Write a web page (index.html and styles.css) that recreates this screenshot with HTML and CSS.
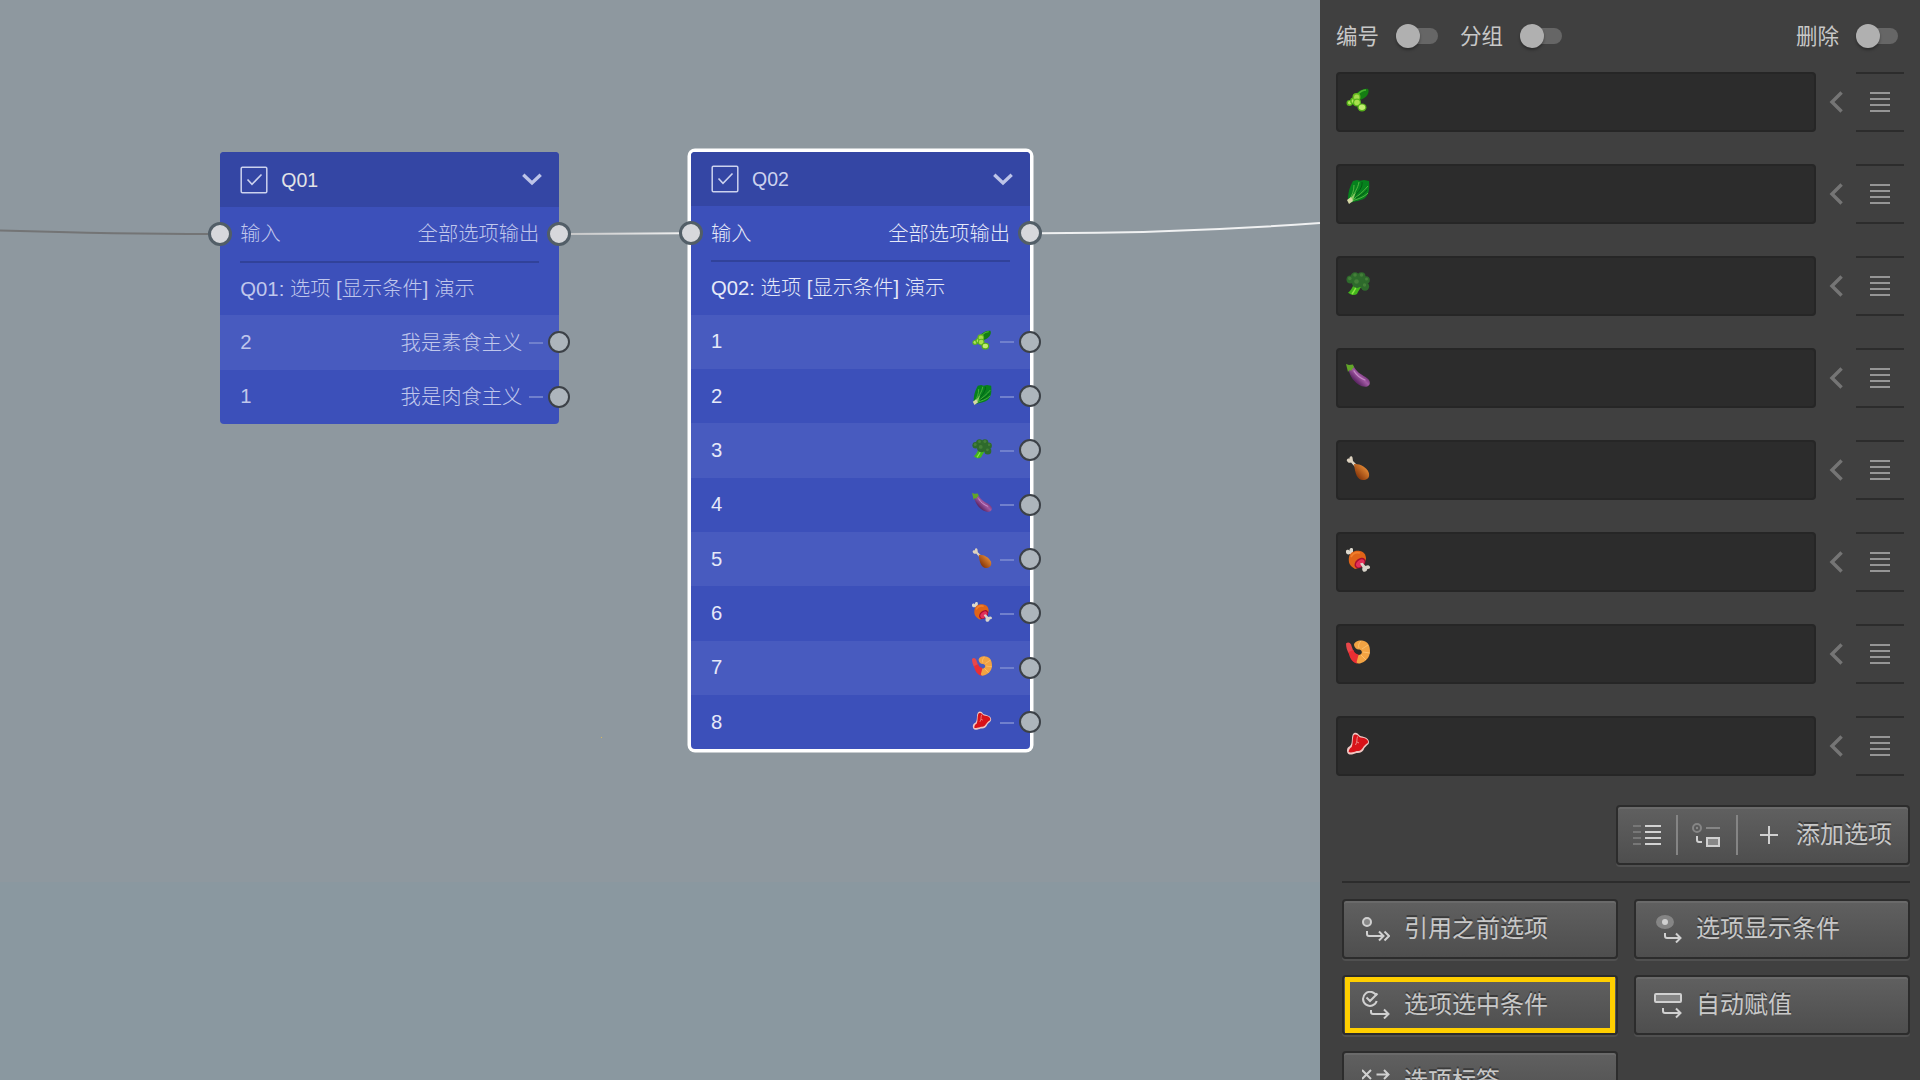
FILE: index.html
```html
<!DOCTYPE html>
<html lang="zh-CN">
<head>
<meta charset="utf-8">
<title>选项 [显示条件] 演示</title>
<link rel="stylesheet" href="styles.css">
</head>
<body>
<svg class="defs" width="0" height="0" aria-hidden="true">
  <defs>
    <linearGradient id="g-egg" x1="0" y1="1" x2="1" y2="0"><stop offset=".3" stop-color="#5f2767"/><stop offset=".52" stop-color="#a25aa4"/><stop offset=".7" stop-color="#6b2d73"/></linearGradient>
    <linearGradient id="g-leg" x1="1" y1="0" x2="0" y2="1"><stop offset=".2" stop-color="#e58a35"/><stop offset=".75" stop-color="#8f3d0d"/></linearGradient>
    <linearGradient id="g-wire" gradientUnits="userSpaceOnUse" x1="560" y1="0" x2="690" y2="0"><stop offset="0" stop-color="#c3c4c5"/><stop offset="1" stop-color="#f2f2f2"/></linearGradient>
    <symbol id="cucumber" viewBox="0 0 24 24">
      <path d="M9 7C13 2 19 0 22 1c2 3-1 9-8 11z" fill="#147d13"/>
      <path d="M12 6c3-3 6-4 8-4" stroke="#49b32f" stroke-width="1.4" fill="none"/>
      <circle cx="3.5" cy="15" r="3" fill="#58b51c"/><circle cx="3.7" cy="14.7" r="1.8" fill="#b4e35f"/>
      <circle cx="7.5" cy="13" r="3.4" fill="#58b51c"/><circle cx="7.7" cy="13" r="2.1" fill="#b4e35f"/>
      <circle cx="10.5" cy="9" r="4" fill="#66b91f"/><circle cx="10.7" cy="9.2" r="2.6" fill="#a5db4e"/>
      <circle cx="11" cy="14.5" r="4" fill="#58b51c"/><circle cx="11" cy="14.5" r="2.8" fill="#a9e04d"/>
      <ellipse cx="16" cy="19.4" rx="4.5" ry="4" fill="#55ae1a"/><ellipse cx="16" cy="19.2" rx="3.2" ry="2.7" fill="#c1ec70"/>
    </symbol>
    <symbol id="leafy" viewBox="0 0 24 24">
      <path d="M2 20C2 10 5 5 7 1l4-1 3 .8L18 0l5 1c.6 6 .6 13-4 17-4 3-10 3-15 5z" fill="#06811d"/>
      <path d="M13 2c-1 6-5 12-9 18M22 6c-4 5-10 10-17 15M8 5c0 6-2 10-4 14M22 13c-5 5-11 6-16 8" stroke="#5cba46" stroke-width=".9" fill="none"/>
      <path d="M16 2c1 5-4 11-8 14M21 10c-3 4-7 6-11 8" stroke="#045a15" stroke-width="1" fill="none"/>
      <path d="M3 20l7-8-3 8z" fill="#8ccb66"/>
      <path d="M1 20l4-3 2 4-4 3z" fill="#d5d8a5"/>
    </symbol>
    <symbol id="broccoli" viewBox="0 0 24 24">
      <path d="M8 12l8 1c-1 3-4 6-5 9q-3 2-6 .4l-3-1.6c3-2 4-5 6-8.800z" fill="#43b51c"/>
      <path d="M10 14c0 3-2 5-4 8" stroke="#8ae545" stroke-width="1.5" fill="none"/>
      <g fill="#2e6a2c"><circle cx="4.500" cy="7.500" r="4"/><circle cx="9" cy="4.500" r="4.200"/><circle cx="15.500" cy="4.300" r="4"/><circle cx="20" cy="8" r="3.800"/><circle cx="19" cy="14.500" r="4.200"/><circle cx="11" cy="11" r="5"/><circle cx="15" cy="11" r="4"/></g>
      <g fill="#447f39"><circle cx="3.800" cy="6.500" r="1.800"/><circle cx="9" cy="3" r="1.800"/><circle cx="15.500" cy="3" r="1.800"/><circle cx="20.500" cy="7" r="1.500"/><circle cx="10.500" cy="9.500" r="2.300"/><circle cx="18.500" cy="13" r="1.700"/></g>
    </symbol>
    <symbol id="eggplant" viewBox="0 0 24 24">
      <path d="M2.500 4l5-2c3 6 7 8 12 11 4 2.500 5 5 4 7.500-2 3.500-7 2.500-11 0C6 16 3 10 2.500 4z" fill="url(#g-egg)"/>
      <path d="M8 7c2.500 4.500 6 7 11 9" stroke="#c58bc5" stroke-width="1.200" stroke-linecap="round" fill="none"/>
      <path d="M0 0l3 1 4-.5 1 3-1.500 1-1 2-2-.5L2 8 1 4z" fill="#62a628"/>
    </symbol>
    <symbol id="drumstick" viewBox="0 0 24 24">
      <path d="M1 5C0 3 3 2 3.500 3 3 0 6-.5 6.500 1.500L7 5l4 4-2 2-4-4.500C4 7 2 7 1 5z" fill="#ddd2c0"/>
      <path d="M8 8c6-.5 12 3 14.500 8 2 5-1 8-5.500 8-6 0-8-7-9-16z" fill="url(#g-leg)"/>
    </symbol>
    <symbol id="meatbone" viewBox="0 0 24 24">
      <path d="M0 3c1-2 3-1 3.500 0C3 0 6-1 7 1v4l3 3-3 2-3-4C2 7-.5 6 0 3z" fill="#ddd9ce"/>
      <path d="M3 9C4 4 9 2 14 3c5 1 6 5 6 8-2 6-6 9-11 10C4 18 2 15 3 9z" fill="#e06418"/>
      <path d="M5 9c2-4 5-5 9-4" stroke="#f07f2c" stroke-width="1.800" fill="none"/>
      <ellipse cx="14" cy="15" rx="6.300" ry="4.300" transform="rotate(-42 14 15)" fill="#a80d31"/>
      <ellipse cx="14.200" cy="15.300" rx="4.800" ry="3.100" transform="rotate(-42 14.200 15.300)" fill="#e2305a"/>
      <path d="M14 15.500l2.500-.800 3 3.300c2-1 3.500-1 4.300.5 1 2-1.500 2.500-2.500 2.500 0 2-3 4-4.500 2-1-1.500-.5-2.500-.3-3.500z" fill="#d9d5cb"/>
    </symbol>
    <symbol id="shrimp" viewBox="0 0 24 24">
      <path d="M0 3.500c2-2 4-1 5 1l2.500 7-4 3C1 11 0 7 0 3.500z" fill="#e8474a"/>
      <path d="M2.500 12l5-2c.5 2.500 2.500 4 5 4.500l1 8.500-3 .5c-5-2-7-6-8-11.500z" fill="#e92e33"/>
      <path d="M8 5c0-3 4-5 8-4.500C22 1 24 6 24 11c0 7-5 11-10 12.500-3 .5-4-1-3-3l1.500-5.500C16.500 15 17 10.500 13.500 9.500 11 10 8.500 8 8 5z" fill="#f2a343"/>
      <path d="M15 1c-2 2-3 4-2 7M22 5l-6 4M24 13l-7-1M20 20l-5-5" stroke="#ffc773" stroke-width=".8" fill="none"/>
    </symbol>
    <symbol id="steak" viewBox="0 0 24 24">
      <path d="M7 2c2-2.500 5-1 6 1 1 1.500 3 1 5 2 4 1 6 4 4.500 7-2 2-4 3-5 6-2 3-5 3-7 3-3 1-7 3-9 0C0 17 2 15 4 14c3-3 1-8 3-12z" fill="#efc6c2"/>
      <path d="M7.500 3.500c1-2 4-1 5 .500.700 1.500 3 1.500 5.500 2 3.500 1 4.700 3.500 3.700 5-2 1-4 3-5 5-2 3-4 3-6 3-2 1-6 2-8 1 0-2 1-4 3-5 1.500-4 .5-7 1.800-11.500z" fill="#d81219"/>
      <path d="M11.500 4.500c-1 3 0 5-2 8.500M11 10l2 1" stroke="#f0a5a0" stroke-width=".8" fill="none"/>
    </symbol>
    <symbol id="check" viewBox="0 0 28 28"><rect x="1.200" y="1.200" width="25.600" height="25.600" rx="1.200" fill="none" stroke="currentColor" stroke-width="1.500"/><path d="M7.500 13.500l4.500 4.800L21.500 8.500" fill="none" stroke="currentColor" stroke-width="1.600"/></symbol>
    <symbol id="down" viewBox="0 0 20 13"><path d="M1.300 1.800L10 10l8.700-8.200" fill="none" stroke="currentColor" stroke-width="3.400"/></symbol>
    <symbol id="left" viewBox="0 0 14 22"><path d="M12.600 1.500L3 11l9.600 9.500" fill="none" stroke="currentColor" stroke-width="3.400"/></symbol>
  </defs>
</svg>

<div class="app">
  <main class="canvas">
    <svg class="wires" viewBox="0 0 1320 1080" fill="none">
      <path d="M0 230.500C70 232.500 130 234 210 234" stroke="#737475" stroke-width="2"/>
      <path d="M568 233.900L682 233.300" stroke="url(#g-wire)" stroke-width="2"/>
      <path d="M1040 233.200C1140 233.200 1230 229.500 1320 223" stroke="#f0f1f2" stroke-width="2"/>
      <rect x="601" y="737" width="1" height="1" fill="#d5b85f"/>
    </svg>

    <section class="node node-first">
      <header class="node-head"><svg class="check"><use href="#check"/></svg><span class="name">Q01</span><svg class="down"><use href="#down"/></svg></header>
      <div class="row io"><span>输入</span><span>全部选项输出</span><i class="port port-in"></i><i class="port port-out"></i></div>
      <div class="row caption">Q01: 选项 [显示条件] 演示</div>
      <div class="row option"><span>2</span><span class="value">我是素食主义</span><i class="dash"></i><i class="port port-option"></i></div>
      <div class="row option"><span>1</span><span class="value">我是肉食主义</span><i class="dash"></i><i class="port port-option"></i></div>
    </section>

    <section class="node node-second">
      <header class="node-head"><svg class="check"><use href="#check"/></svg><span class="name">Q02</span><svg class="down"><use href="#down"/></svg></header>
      <div class="row io"><span>输入</span><span>全部选项输出</span><i class="port port-in"></i><i class="port port-out"></i></div>
      <div class="row caption">Q02: 选项 [显示条件] 演示</div>
      <div class="row option"><span>1</span><svg class="food"><use href="#cucumber"/></svg><i class="dash"></i><i class="port port-option"></i></div>
      <div class="row option"><span>2</span><svg class="food"><use href="#leafy"/></svg><i class="dash"></i><i class="port port-option"></i></div>
      <div class="row option"><span>3</span><svg class="food"><use href="#broccoli"/></svg><i class="dash"></i><i class="port port-option"></i></div>
      <div class="row option"><span>4</span><svg class="food"><use href="#eggplant"/></svg><i class="dash"></i><i class="port port-option"></i></div>
      <div class="row option"><span>5</span><svg class="food"><use href="#drumstick"/></svg><i class="dash"></i><i class="port port-option"></i></div>
      <div class="row option"><span>6</span><svg class="food"><use href="#meatbone"/></svg><i class="dash"></i><i class="port port-option"></i></div>
      <div class="row option"><span>7</span><svg class="food"><use href="#shrimp"/></svg><i class="dash"></i><i class="port port-option"></i></div>
      <div class="row option"><span>8</span><svg class="food"><use href="#steak"/></svg><i class="dash"></i><i class="port port-option"></i></div>
    </section>
  </main>

  <aside class="panel">
    <div class="switches">
      <label class="switch"><span>编号</span><i class="toggle"></i></label>
      <label class="switch"><span>分组</span><i class="toggle"></i></label>
      <label class="switch switch-delete"><span>删除</span><i class="toggle"></i></label>
    </div>

    <div class="items">
      <div class="item"><div class="field"><svg class="food"><use href="#cucumber"/></svg></div><svg class="left"><use href="#left"/></svg><div class="grip"><i></i><i></i><i></i><i></i></div></div>
      <div class="item"><div class="field"><svg class="food"><use href="#leafy"/></svg></div><svg class="left"><use href="#left"/></svg><div class="grip"><i></i><i></i><i></i><i></i></div></div>
      <div class="item"><div class="field"><svg class="food"><use href="#broccoli"/></svg></div><svg class="left"><use href="#left"/></svg><div class="grip"><i></i><i></i><i></i><i></i></div></div>
      <div class="item"><div class="field"><svg class="food"><use href="#eggplant"/></svg></div><svg class="left"><use href="#left"/></svg><div class="grip"><i></i><i></i><i></i><i></i></div></div>
      <div class="item"><div class="field"><svg class="food"><use href="#drumstick"/></svg></div><svg class="left"><use href="#left"/></svg><div class="grip"><i></i><i></i><i></i><i></i></div></div>
      <div class="item"><div class="field"><svg class="food"><use href="#meatbone"/></svg></div><svg class="left"><use href="#left"/></svg><div class="grip"><i></i><i></i><i></i><i></i></div></div>
      <div class="item"><div class="field"><svg class="food"><use href="#shrimp"/></svg></div><svg class="left"><use href="#left"/></svg><div class="grip"><i></i><i></i><i></i><i></i></div></div>
      <div class="item"><div class="field"><svg class="food"><use href="#steak"/></svg></div><svg class="left"><use href="#left"/></svg><div class="grip"><i></i><i></i><i></i><i></i></div></div>
    </div>

    <div class="toolbar button">
      <div class="tool"><svg class="icon" viewBox="0 0 28 28"><path d="M0 5h8M0 11h8M0 17h8M0 23h8" stroke="#777" stroke-width="2"/><path d="M12 5h16M12 11h16M12 17h16M12 23h16" stroke="#d2d2d2" stroke-width="2"/></svg></div>
      <div class="tool tool-branch"><svg class="icon" viewBox="0 0 28 28" fill="none"><circle cx="5" cy="7" r="4" stroke="#858585" stroke-width="2"/><circle cx="5" cy="7" r="1.200" fill="#888"/><path d="M14 7h14" stroke="#858585" stroke-width="2"/><path d="M5 15v4q0 2 2 2h3" stroke="#d0d0d0" stroke-width="2"/><rect x="15" y="17" width="12" height="8" fill="#888" stroke="#d0d0d0" stroke-width="2"/></svg></div>
      <div class="add"><svg class="plus" viewBox="0 0 18 18"><path d="M9 0v18M0 9h18" stroke="#d0d0d0" stroke-width="2"/></svg><span>添加选项</span></div>
    </div>

    <div class="actions">
      <div class="button action"><svg class="icon" viewBox="0 0 28 28"><circle cx="5" cy="7" r="4" fill="#888"/><path d="M5 16v3q0 2 2 2h14M17 16.500l4.500 4.500-4.500 4.500M22.500 16.500L27 21l-4.500 4.500"/></svg><span>引用之前选项</span></div>
      <div class="button action"><svg class="icon" viewBox="0 0 28 28"><ellipse class="lid" cx="11" cy="7" rx="9" ry="7"/><circle class="pupil" cx="11" cy="7" r="3"/><path d="M11 18v3q0 2 2 2h14M22 18.500l4.500 4.500-4.500 4.500"/></svg><span>选项显示条件</span></div>
      <div class="button action action-marked"><svg class="icon" viewBox="0 0 28 28"><path d="M14.500 5.200A7 7 0 1 0 14.700 10M4.500 6.500L8 10l7.500-7.500M9 19v2q0 2 2 2h15M22 18.500l4.500 4.500-4.500 4.500"/></svg><span>选项选中条件</span></div>
      <div class="button action"><svg class="icon" viewBox="0 0 28 28"><rect x="1" y="3" width="26" height="8" rx="1" fill="#858585"/><path d="M9 17v3q0 2 2 2h16M22 17.500l4.500 4.500-4.500 4.500"/></svg><span>自动赋值</span></div>
      <div class="button action"><svg class="icon" viewBox="0 0 28 28"><path d="M0 3l9 9M9 3l-9 9M14.500 7.500H27M22 3l4.500 4.500L22 12"/></svg><span>选项标签</span></div>
    </div>
  </aside>
</div>
</body>
</html>
```
FILE: styles.css
```css
* { box-sizing: border-box; }

body {
  margin: 0;
  overflow: hidden;
  font-family: "Liberation Sans", "Noto Sans CJK SC", sans-serif;
}

.defs { position: absolute; }

.app { display: flex; width: 1920px; height: 1080px; overflow: hidden; }

.canvas {
  position: relative;
  width: 1320px;
  height: 1080px;
  background: linear-gradient(#8e989f 0 882px, #8a98a0 882px);
}

.wires { position: absolute; inset: 0; width: 1320px; height: 1080px; }

/* Graph nodes */
.node {
  position: absolute;
  display: grid;
  width: 339px;
  grid-auto-rows: 54.3px;
  border-radius: 4px;
  background: #3c50ba;
  font-size: 20.3px;
  font-weight: 300;
  color: #c0c7ec;
}

.node-first { left: 220.300px; top: 152.400px; }

.node-second {
  left: 691px;
  top: 151.900px;
  color: #e6e9f8;
  box-shadow: 0 0 0 3.500px #fff;
}

.node-head {
  display: flex;
  align-items: center;
  padding: 0 17px 0 20px;
  border-radius: 4px 4px 0 0;
  background: #3446a4;
}

.check { width: 28px; height: 28px; color: #ccd2ee; }
.name { flex: 1; margin: 1px 0 0 13px; font-size: 19.500px; color: #e2e3e6; }
.node-second .name { color: #ccd2ee; }
.down { width: 20px; height: 13px; color: #bdc4e8; }

.row {
  position: relative;
  display: flex;
  align-items: center;
  padding: 0 20px;
  white-space: pre;
}

.io { justify-content: space-between; }
.io, .caption { padding-bottom: 3px; }

.io::after {
  content: "";
  position: absolute;
  left: 20px;
  right: 20px;
  bottom: -2px;
  height: 2px;
  background: #31429a;
}

.option { padding-right: 16px; }
.option:nth-child(even) { background: #485bbf; }
.option:last-child { border-radius: 0 0 4px 4px; }
.value { margin: 0 7px 3px auto; }
.node .food { width: 20px; height: 20px; margin: -3px 8px 0 auto; }
.dash { width: 14px; height: 2px; margin-top: 1px; background: #7080cd; }

.port { position: absolute; border-radius: 50%; }

.port-in, .port-out {
  top: 15px;
  width: 24px;
  height: 24px;
  border: 3.500px solid #525e67;
  background: #d7d8dc;
}

.port-in { left: -12px; }
.port-out { right: -12px; }

.port-option {
  top: 16px;
  right: -11px;
  width: 22px;
  height: 22px;
  border: 2px solid #3c4147;
  background: #adb5bc;
}

/* Option panel */
.panel {
  width: 600px;
  height: 1080px;
  padding: 0 10px 0 16px;
  background: #404040;
  color: #c8c8c8;
  font-family: "Noto Sans CJK SC", sans-serif;
}

.switches {
  display: flex;
  align-items: center;
  gap: 22px;
  height: 72px;
  padding-right: 12px;
  font-size: 21.500px;
}

.switch { display: flex; align-items: center; gap: 17px; }
.switch span { margin-bottom: 3px; }
.switch-delete { margin-left: auto; }

.toggle {
  display: flex;
  align-items: center;
  width: 42px;
  height: 16px;
  border-radius: 8px;
  background: #666;
}

.toggle::before {
  content: "";
  width: 24px;
  height: 24px;
  border-radius: 50%;
  background: #b0b0b0;
  box-shadow: 0 2px 3px #0005;
}

.items { display: grid; gap: 32px; }
.item { display: flex; align-items: center; height: 60px; }

.field {
  width: 480px;
  height: 60px;
  padding: 14px 8px;
  border: 2px solid #262626;
  border-radius: 4px;
  background: #2c2c2c;
}

.field .food { display: block; width: 24px; height: 24px; }
.left { width: 14px; height: 22px; margin: 0 13px; color: #757575; }

.grip {
  display: flex;
  flex-direction: column;
  gap: 4px;
  width: 48px;
  height: 60px;
  padding: 18px 14px;
  border: solid #2c2c2c;
  border-width: 2px 0;
}

.grip i { height: 2px; background: #969696; }

.button {
  border: 2px solid #2c2c2c;
  border-radius: 4px;
  background: linear-gradient(#606060, #4e4e4e);
  box-shadow: inset 0 2px #6a6a6a, 0 2px #505050;
  font-size: 24px;
  text-shadow: 0 -2px #3b3b3b;
}

.button span { margin-bottom: 5px; }

.toolbar {
  display: flex;
  align-items: center;
  width: 294px;
  height: 60px;
  margin: 29px 0 0 auto;
}

.tool {
  display: flex;
  align-items: center;
  justify-content: center;
  width: 60px;
  height: 40px;
  padding-right: 1px;
  border-right: 2px solid #858585;
}

.tool-branch { padding-right: 3px; }
.icon { width: 28px; height: 28px; flex: none; }
.add { display: flex; align-items: center; padding-left: 22px; gap: 18px; }
.plus { width: 18px; height: 18px; }

.actions {
  display: grid;
  grid-template-columns: 276px 276px;
  grid-auto-rows: 60px;
  gap: 16px;
  margin: 16px 0 0 6px;
  padding-top: 16px;
  border-top: 2px solid #2c2c2c;
}

.action { display: flex; align-items: center; padding-left: 18px; gap: 14px; }

.action .icon {
  fill: none;
  stroke: #d0d0d0;
  stroke-width: 2;
}

.action .lid { fill: #858585; stroke: none; }
.action .pupil { fill: #d0d0d0; stroke: none; }

.action-marked { position: relative; }

.action-marked::after {
  content: "";
  position: absolute;
  inset: 0 1px 0 1px;
  border: 5px solid #ffcf00;
}
```
